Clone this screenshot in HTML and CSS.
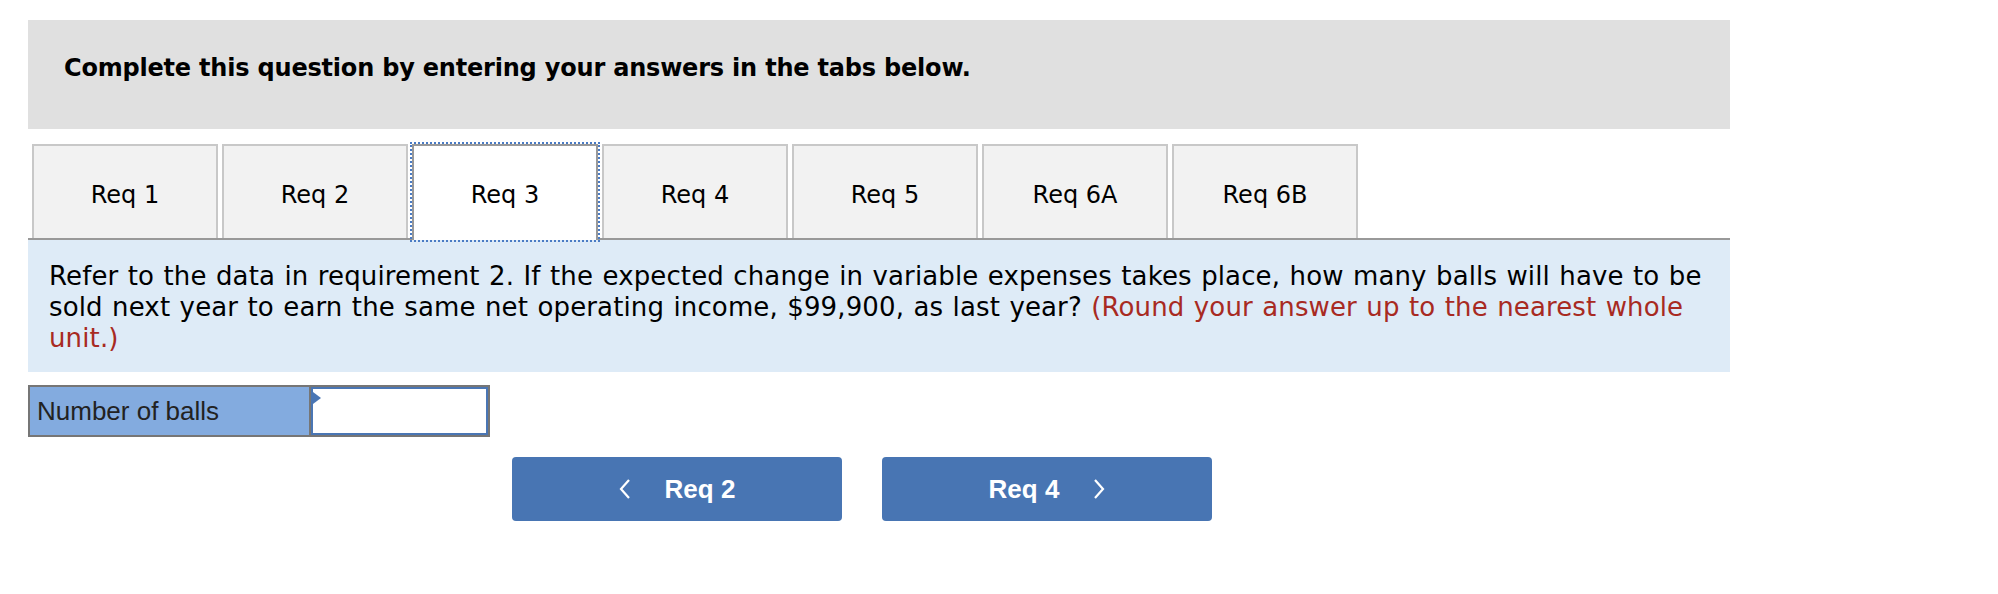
FILE: index.html
```html
<!DOCTYPE html>
<html>
<head>
<meta charset="utf-8">
<link rel="stylesheet" href="styles.css">
</head>
<body>
<div class="page">
  <div class="header">
    <h2 class="header-title">Complete this question by entering your answers in the tabs below.</h2>
  </div>
  <div class="tabs">
    <div class="tab">Req 1</div>
    <div class="tab">Req 2</div>
    <div class="tab tab-active">Req 3</div>
    <div class="tab">Req 4</div>
    <div class="tab">Req 5</div>
    <div class="tab">Req 6A</div>
    <div class="tab">Req 6B</div>
  </div>
  <div class="question">
    <p class="question-text">Refer to the data in requirement 2. If the expected change in variable expenses takes place, how many balls will have to be sold next year to earn the same net operating income, $99,900, as last year? <span class="hint">(Round your answer up to the nearest whole unit.)</span></p>
  </div>
  <div class="answer">
    <div class="answer-label">Number of balls</div>
    <div class="answer-cell">
      <span class="marker"></span>
      <input class="answer-input" type="text">
    </div>
  </div>
  <div class="nav">
    <button class="nav-btn">
      <svg class="chev" width="12" height="20" viewBox="0 0 12 20"><polyline points="10,1 2,10 10,19" fill="none" stroke="#fff" stroke-width="2.2"/></svg>
      <span>Req 2</span>
    </button>
    <button class="nav-btn">
      <span>Req 4</span>
      <svg class="chev" width="12" height="20" viewBox="0 0 12 20"><polyline points="2,1 10,10 2,19" fill="none" stroke="#fff" stroke-width="2.2"/></svg>
    </button>
  </div>
</div>
</body>
</html>
```
FILE: styles.css
```css
* { box-sizing: border-box; }
body {
  margin: 0;
  background: #fff;
  font-family: "DejaVu Sans", Verdana, sans-serif;
  color: #000;
}
.page {
  padding: 20px 0 0 28px;
  width: 1730px;
}
.header {
  background: #e0e0e0;
  height: 109px;
  padding: 32px 0 0 36px;
}
.header-title {
  margin: 0;
  font-size: 24px;
  letter-spacing: -0.2px;
  line-height: 32px;
  font-weight: bold;
}
.tabs {
  display: flex;
  gap: 4px;
  margin-top: 15px;
  padding-left: 4px;
  border-bottom: 2px solid #999;
  align-items: flex-start;
}
.tab {
  width: 186px;
  height: 94px;
  background: #f2f2f2;
  border: 2px solid #c8c8c8;
  border-bottom: 0;
  display: flex;
  align-items: center;
  justify-content: center;
  padding-top: 5px;
  font-size: 24px;
}
.tab-active {
  background: #fff;
  border-color: #999;
  height: 96px;
  margin-bottom: -2px;
  padding-bottom: 2px;
  outline: 2px dotted #4a7bc4;
  outline-offset: 0;
}
.question {
  background: #deebf7;
  padding: 21px 20px 18px 21px;
}
.question-text {
  margin: 0;
  font-size: 26px;
  line-height: 31px;
  letter-spacing: 0.13px;
  word-spacing: 1px;
}
.hint { color: #a82a22; }
.answer {
  display: flex;
  margin-top: 13px;
  width: 462px;
  height: 52px;
  border: 2px solid #767676;
}
.answer-label {
  width: 281px;
  background: #83abdf;
  border-right: 2px solid #767676;
  display: flex;
  align-items: center;
  padding-left: 7px;
  font-family: "Liberation Sans", Arial, sans-serif;
  font-size: 26px;
  color: #222;
}
.answer-cell {
  position: relative;
  flex: 1;
  display: flex;
}
.answer-input {
  flex: 1;
  width: 100%;
  border: 2px solid #4a76b4;
  background: #fff;
  margin: 0;
  outline: none;
}
.marker {
  position: absolute;
  left: 2px;
  top: 5px;
  width: 0;
  height: 0;
  border-top: 6px solid transparent;
  border-bottom: 6px solid transparent;
  border-left: 8px solid #4a76b4;
}
.nav {
  display: flex;
  gap: 40px;
  margin-top: 20px;
  padding-left: 484px;
}
.nav-btn {
  width: 330px;
  height: 64px;
  background: #4875b3;
  border: 0;
  border-radius: 4px;
  color: #fff;
  font-family: "Liberation Sans", Arial, sans-serif;
  font-weight: bold;
  font-size: 26px;
  display: flex;
  align-items: center;
  justify-content: center;
  gap: 34px;
  padding: 0;
}
.chev { display: block; }
```
